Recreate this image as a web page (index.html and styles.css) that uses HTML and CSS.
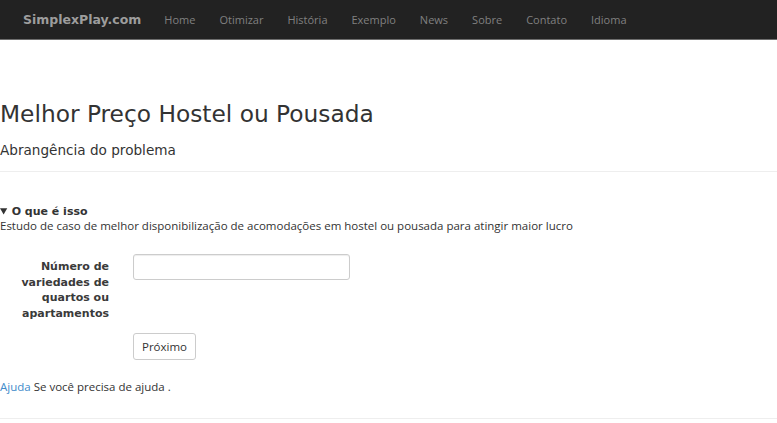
FILE: index.html
```html
<!DOCTYPE html>
<html lang="pt">
<head>
<meta charset="utf-8">
<title>SimplexPlay.com</title>
<link rel="stylesheet" href="styles.css">
</head>
<body>
<nav class="navbar">
  <a class="brand" href="#">SimplexPlay.com</a>
  <ul class="nav">
    <li><a href="#">Home</a></li>
    <li><a href="#">Otimizar</a></li>
    <li><a href="#">História</a></li>
    <li><a href="#">Exemplo</a></li>
    <li><a href="#">News</a></li>
    <li><a href="#">Sobre</a></li>
    <li><a href="#">Contato</a></li>
    <li><a href="#">Idioma</a></li>
  </ul>
</nav>
<main class="content">
  <h1 class="title">Melhor Preço Hostel ou Pousada</h1>
  <h3 class="subtitle">Abrangência do problema</h3>
  <hr class="rule">
  <details class="info" open>
    <summary class="info-summary">O que é isso</summary>
    <p class="info-text">Estudo de caso de melhor disponibilização de acomodações em hostel ou pousada para atingir maior lucro</p>
  </details>
  <form class="form">
    <label class="form-label" for="n">Número de variedades de quartos ou apartamentos</label>
    <input class="form-input" id="n" type="text">
    <span></span>
    <button class="btn" type="button">Próximo</button>
  </form>
  <p class="help"><a class="help-link" href="#">Ajuda</a> Se você precisa de ajuda .</p>
  <hr class="rule rule-bottom">
</main>
</body>
</html>
```
FILE: styles.css
```css
* { box-sizing: border-box; }
html, body { margin: 0; padding: 0; background: #fff; }
body {
  font-family: "Open Sans", "DejaVu Sans", sans-serif;
  font-size: 11.5px;
  color: #333;
}
.navbar {
  display: flex;
  align-items: center;
  height: 40px;
  background: #222222;
  border-bottom: 1px solid #6e6e6e;
  padding-left: 23px;
}
.brand {
  font-family: "DejaVu Sans", sans-serif;
  font-weight: bold;
  font-size: 12.5px;
  color: #9d9d9d;
  text-decoration: none;
  margin-right: 11px;
}
.nav {
  display: flex;
  list-style: none;
  margin: 0;
  padding: 0;
}
.nav a {
  display: block;
  padding: 0 12px;
  font-family: "Open Sans", sans-serif;
  font-size: 11px;
  color: #808080;
  text-decoration: none;
}
.content { padding: 0; }
.title {
  font-family: "DejaVu Sans", sans-serif;
  font-weight: normal;
  font-size: 23.3px;
  line-height: 26px;
  margin: 61px 0 0;
  color: #333;
}
.subtitle {
  font-family: "DejaVu Sans", sans-serif;
  font-weight: normal;
  font-size: 13.6px;
  line-height: 16px;
  margin: 15px 0 0;
  color: #333;
}
.rule {
  border: 0;
  border-top: 1px solid #eeeeee;
  margin: 13px 0 0;
}
.info { margin-top: 33px; }
.info-summary {
  font-family: "DejaVu Sans", sans-serif;
  font-weight: bold;
  font-size: 11px;
  line-height: 13px;
  color: #333;
  cursor: pointer;
}
.info-text {
  margin: 0;
  line-height: 15px;
}
.form {
  display: grid;
  grid-template-columns: 109px 217px;
  column-gap: 24px;
  row-gap: 12px;
  margin-top: 21px;
}
.form-label {
  font-family: "DejaVu Sans", sans-serif;
  font-weight: bold;
  font-size: 11px;
  line-height: 15.6px;
  text-align: right;
  padding-top: 5px;
  color: #3a3a3a;
}
.form-input {
  height: 26px;
  border: 1px solid #cccccc;
  border-radius: 3px;
  box-shadow: inset 0 1px 1px rgba(0,0,0,.075);
}
.btn {
  justify-self: start;
  height: 27px;
  padding: 0 8px;
  background: #fff;
  border: 1px solid #cccccc;
  border-radius: 3px;
  font-family: "Open Sans", sans-serif;
  font-size: 11.5px;
  color: #333;
}
.help {
  margin: 19px 0 0;
  line-height: 16px;
}
.help-link { color: #428bca; text-decoration: none; }
.rule-bottom { margin-top: 23px; }
```
